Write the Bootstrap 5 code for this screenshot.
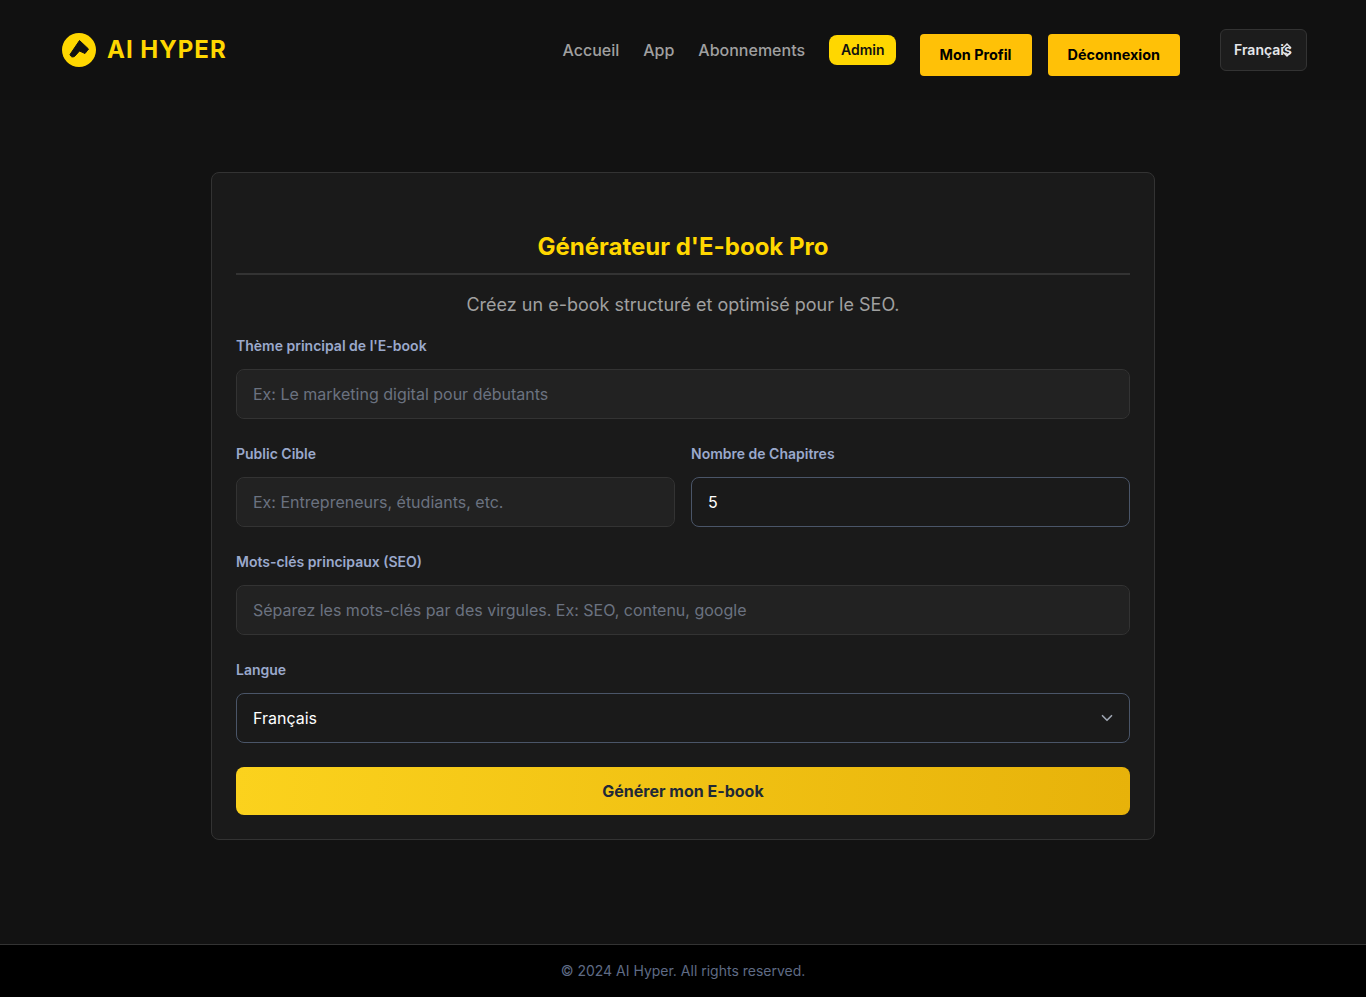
<!DOCTYPE html>
<html lang="fr">
<head>
    <meta charset="UTF-8">
    <meta name="viewport" content="width=device-width, initial-scale=1.0">
    <title>AI Hyper - Générateur d'E-book Pro</title>
    <link href="https://cdn.jsdelivr.net/npm/bootstrap@5.3.0/dist/css/bootstrap.min.css" rel="stylesheet">
    <style>
        body {
            background: #121212;
            font-family: Inter, "Liberation Sans", sans-serif;
            color: #fff;
            min-height: 997px;
        }

        .site-header {
            background: #111;
            height: 100px;
            padding: 0 59px 0 62px;
        }

        .brand-link {
            gap: 11px;
        }

        .brand-name {
            color: #ffd700;
            font-size: 24px;
            font-weight: 700;
            letter-spacing: 1px;
        }

        .top-link {
            color: #a0a0a0;
            font-size: 16px;
            font-weight: 500;
            text-decoration: none;
        }

        .admin-pill {
            background: #ffd700;
            color: #111;
            font-size: 14px;
            font-weight: 600;
            padding: 5px 11px 5px 12px;
            border-radius: 8px;
            text-decoration: none;
            line-height: 20px;
        }

        .gold-btn {
            background: #ffc107;
            color: #000;
            font-size: 14.4px;
            font-weight: 700;
            height: 42px;
            padding: 0 20px;
            border: 0;
            border-radius: 4px;
            margin-top: 10px;
        }

        .lang-box {
            position: relative;
            width: 87px;
            height: 42px;
            margin-left: 40px;
            background: #1c1c1c;
            border: 1px solid #333;
            border-radius: 6px;
            padding-left: 13px;
            font-size: 14px;
            font-weight: 600;
            line-height: 40px;
            color: #e5e7eb;
            overflow: hidden;
        }

        .lang-arrows {
            position: absolute;
            right: 14px;
            top: 12px;
        }

        .main-area {
            height: 844px;
            padding-top: 72px;
        }

        .form-panel {
            width: 944px;
            height: 668px;
            margin: 0 auto;
            background: #1a1a1a;
            border: 1px solid #333;
            border-radius: 8px;
            padding: 24px;
        }

        .panel-title {
            color: #ffd700;
            font-size: 24px;
            font-weight: 700;
            line-height: 32px;
            padding: 34px 0 10px;
            margin: 0;
            border-bottom: 2px solid #333;
        }

        .panel-sub {
            color: #a0a0a0;
            font-size: 18px;
            line-height: 28px;
            margin: 16px 0 17px;
        }

        .field-label {
            color: #9aa9cc;
            font-size: 14px;
            font-weight: 600;
            line-height: 20px;
            margin-bottom: 13px;
            display: block;
        }

        .form-control.dark-input,
        .form-select.dark-input {
            height: 50px;
            background-color: #222;
            border: 1px solid #333;
            border-radius: 8px;
            color: #fff;
            font-size: 16px;
            padding: 0 16px;
        }

        .form-control.dark-input::placeholder {
            color: #6b7280;
            opacity: 1;
        }

        .form-control.dark-input.has-value,
        .form-select.dark-input {
            background-color: #1a1a1a;
            border-color: #4a5568;
        }

        .form-select.dark-input {
            background-image: url("data:image/svg+xml,%3csvg xmlns='http://www.w3.org/2000/svg' viewBox='0 0 16 16'%3e%3cpath fill='none' stroke='%239ca3af' stroke-linecap='round' stroke-linejoin='round' stroke-width='1.500' d='m4 6 4 4 4-4'/%3e%3c/svg%3e");
            background-position: right 13px center;
            background-size: 18px 18px;
        }

        .field-block {
            margin-bottom: 25px;
        }

        .field-block.last-block {
            margin-bottom: 24px;
        }

        .generate-btn {
            height: 48px;
            background: linear-gradient(95deg, #fbd21d, #e7b20a);
            color: #1f2937;
            font-size: 16px;
            font-weight: 700;
            border: 0;
            border-radius: 8px;
        }

        .site-footer {
            background: #000;
            border-top: 1px solid #333;
            height: 53px;
            padding-bottom: 2px;
            color: #5f6b85;
            font-size: 14px;
        }
    </style>
</head>
<body>
    <header class="site-header d-flex justify-content-between align-items-center">
        <a class="brand-link d-flex align-items-center text-decoration-none" href="#">
            <svg width="34" height="34" viewBox="0 0 34 34" aria-hidden="true">
                <circle cx="17" cy="17" r="17" fill="#ffd700"/>
                <path d="M17.500 7.500 L26.500 16 L23 20.500 L17.500 18 L12.500 23.500 Q9 25 8 21.500 Z" fill="#111" stroke="#111" stroke-width="1" stroke-linejoin="round"/>
            </svg>
            <span class="brand-name">AI HYPER</span>
        </a>
        <nav class="d-flex align-items-center">
            <div class="d-flex align-items-center gap-4">
                <a class="top-link" href="#">Accueil</a>
                <a class="top-link" href="#">App</a>
                <a class="top-link" href="#">Abonnements</a>
                <a class="admin-pill" href="#">Admin</a>
            </div>
            <button class="gold-btn ms-4">Mon Profil</button>
            <button class="gold-btn ms-3">Déconnexion</button>
            <div class="lang-box">Français
                <svg class="lang-arrows" width="10" height="16" viewBox="0 0 10 16" aria-hidden="true">
                    <path d="M1 6 5 2 9 6M1 10 5 14 9 10" fill="none" stroke="#e5e7eb" stroke-width="1.500"/>
                </svg>
            </div>
        </nav>
    </header>

    <main class="main-area">
        <section class="form-panel">
            <h1 class="panel-title text-center">Générateur d'E-book Pro</h1>
            <p class="panel-sub text-center">Créez un e-book structuré et optimisé pour le SEO.</p>
            <form>
                <div class="field-block">
                    <label class="field-label">Thème principal de l'E-book</label>
                    <input class="form-control dark-input" placeholder="Ex: Le marketing digital pour débutants">
                </div>
                <div class="row gx-3 field-block">
                    <div class="col-6">
                        <label class="field-label">Public Cible</label>
                        <input class="form-control dark-input" placeholder="Ex: Entrepreneurs, étudiants, etc.">
                    </div>
                    <div class="col-6">
                        <label class="field-label">Nombre de Chapitres</label>
                        <input class="form-control dark-input has-value" value="5">
                    </div>
                </div>
                <div class="field-block">
                    <label class="field-label">Mots-clés principaux (SEO)</label>
                    <input class="form-control dark-input" placeholder="Séparez les mots-clés par des virgules. Ex: SEO, contenu, google">
                </div>
                <div class="field-block last-block">
                    <label class="field-label">Langue</label>
                    <select class="form-select dark-input">
                        <option>Français</option>
                        <option>English</option>
                    </select>
                </div>
                <button class="btn generate-btn w-100" type="button">Générer mon E-book</button>
            </form>
        </section>
    </main>

    <footer class="site-footer d-flex justify-content-center align-items-center">© 2024 AI Hyper. All rights reserved.</footer>

    <script src="https://cdn.jsdelivr.net/npm/bootstrap@5.3.0/dist/js/bootstrap.bundle.min.js"></script>
</body>
</html>
